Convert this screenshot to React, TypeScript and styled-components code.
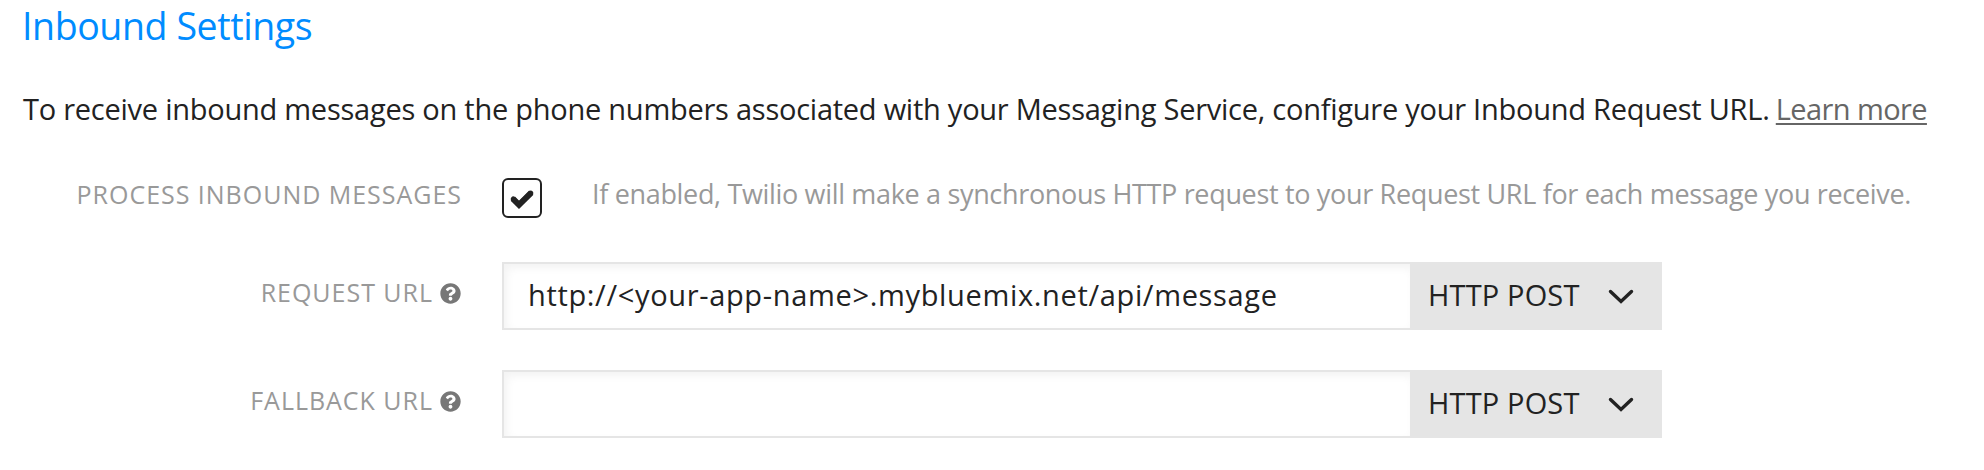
import React from 'react';
import styled, { createGlobalStyle } from 'styled-components';
import { FaQuestionCircle } from 'react-icons/fa';

const GlobalStyle = createGlobalStyle`
  * { box-sizing: border-box; }
  body {
    margin: 0;
    background: #fff;
    color: #222;
    font-family: 'Open Sans', 'Noto Sans', sans-serif;
  }
`;

const Panel = styled.main`
  display: flex;
  flex-direction: column;
  width: 1984px;
  height: 470px;
  overflow: hidden;
`;

const Title = styled.h2`
  margin: 0 0 37px 22px;
  font-size: 37.5px;
  font-weight: 400;
  line-height: 52px;
  letter-spacing: -0.4px;
  color: #008cff;
`;

const Intro = styled.p`
  margin: 0 0 49px 23px;
  font-size: 29px;
  line-height: 40px;
  letter-spacing: -0.25px;
  white-space: nowrap;
`;

const LearnMore = styled.a`
  margin-left: -1px;
  color: #666;
  letter-spacing: -0.6px;
  text-decoration: underline;
  text-decoration-thickness: 2px;
  text-underline-offset: 3px;
`;

const Form = styled.form`
  display: flex;
  flex-direction: column;
  gap: 40px;
`;

const Row = styled.div<{ $spaceAfter?: number }>`
  display: grid;
  grid-template-columns: 462px 1fr;
  column-gap: 40px;
  align-items: start;
  margin-bottom: ${(p) => p.$spaceAfter ?? 0}px;
`;

const Label = styled.label<{ $line: number }>`
  display: flex;
  justify-content: flex-end;
  align-items: center;
  font-size: 25px;
  line-height: ${(p) => p.$line}px;
  letter-spacing: 0.98px;
  color: #999;
  white-space: nowrap;
`;

const HelpIcon = styled(FaQuestionCircle)`
  width: 21px;
  height: 21px;
  margin: 2px 1px 0 7px;
  color: #777;
`;

const CheckField = styled.div`
  display: flex;
  align-items: flex-start;
  gap: 50px;
`;

const Checkbox = styled.span`
  display: flex;
  width: 40px;
  height: 40px;
  border: 2px solid #222;
  border-radius: 6px;
`;

const Hint = styled.span`
  font-size: 27px;
  line-height: 32px;
  letter-spacing: -0.33px;
  color: #999;
  white-space: nowrap;
`;

const UrlField = styled.div`
  display: flex;
  width: 1160px;
  height: 68px;
`;

const UrlInput = styled.input`
  flex: 1;
  min-width: 0;
  padding: 0 0 3px 24px;
  border: 2px solid #e5e5e5;
  border-right: 0;
  border-radius: 0;
  outline: 0;
  background: #fff;
  box-shadow: inset 3px 4px 8px rgba(0, 0, 0, 0.05);
  color: #222;
  font: 400 29px 'Open Sans', 'Noto Sans', sans-serif;
  letter-spacing: 0.66px;
`;

const MethodSelect = styled.div`
  display: flex;
  align-items: center;
  justify-content: space-between;
  width: 252px;
  padding: 0 28px 4px 18px;
  background: #e5e5e5;
  font-size: 29px;
  letter-spacing: 0.15px;
  white-space: nowrap;
`;

const ChevronSvg = styled.svg`
  margin-top: 5px;
`;

function CheckMark() {
  return (
    <svg width="36" height="36" viewBox="0 0 36 36" fill="none">
      <path d="M8.8 18.6 L15 24.8 L27.3 12.6" stroke="#222" strokeWidth="6" strokeLinecap="butt" />
      <path d="M9.2 19 L15 24.8 L26.8 13.1" stroke="#222" strokeWidth="5" strokeLinecap="round" />
    </svg>
  );
}

function Chevron() {
  return (
    <ChevronSvg width="26" height="16" viewBox="0 0 26 16" fill="none">
      <path d="M2.5 2.5 L13 12.5 L23.5 2.5" stroke="#222" strokeWidth="3.4" strokeLinecap="round" />
    </ChevronSvg>
  );
}

function UrlRow({ label, value }: { label: string; value: string }) {
  return (
    <Row>
      <Label $line={60}>
        {label}
        <HelpIcon />
      </Label>
      <UrlField>
        <UrlInput defaultValue={value} />
        <MethodSelect>
          HTTP POST
          <Chevron />
        </MethodSelect>
      </UrlField>
    </Row>
  );
}

export default function App() {
  return (
    <Panel>
      <GlobalStyle />
      <Title>Inbound Settings</Title>
      <Intro>
        To receive inbound messages on the phone numbers associated with your Messaging Service,
        configure your Inbound Request URL. <LearnMore>Learn more</LearnMore>
      </Intro>
      <Form>
        <Row $spaceAfter={4}>
          <Label $line={32}>PROCESS INBOUND MESSAGES</Label>
          <CheckField>
            <Checkbox>
              <CheckMark />
            </Checkbox>
            <Hint>
              If enabled, Twilio will make a synchronous HTTP request to your Request URL for each
              message you receive.
            </Hint>
          </CheckField>
        </Row>
        <UrlRow label="REQUEST URL" value="http://<your-app-name>.mybluemix.net/api/message" />
        <UrlRow label="FALLBACK URL" value="" />
      </Form>
    </Panel>
  );
}
